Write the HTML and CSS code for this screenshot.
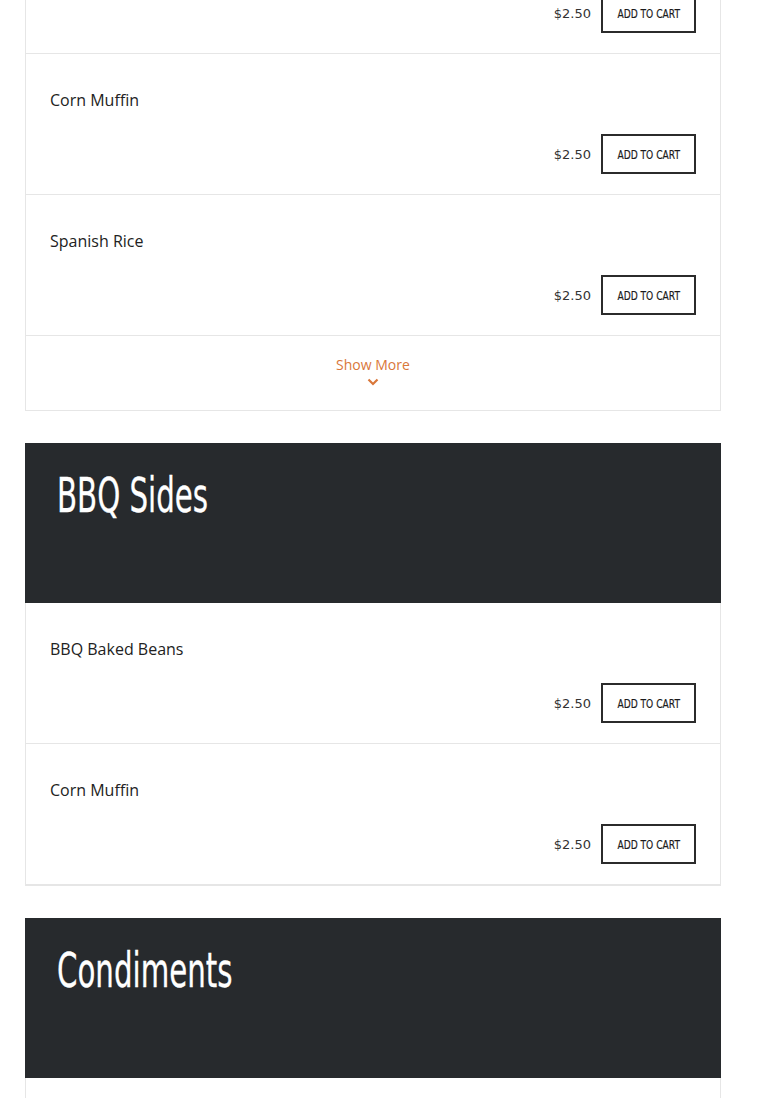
FILE: index.html
```html
<!DOCTYPE html>
<html lang="en">
<head>
  <meta charset="UTF-8" />
  <title>Menu</title>
  <link rel="stylesheet" href="styles.css">
</head>
<body>

  <div class="menu">

    <section class="category first">
      <div class="items">
        <div class="item">
          <p class="item-name">Coleslaw</p>
          <div class="item-buy">
            <span class="price">$2.50</span>
            <button class="add-btn"><span>Add to cart</span></button>
          </div>
        </div>
        <div class="item">
          <p class="item-name">Corn Muffin</p>
          <div class="item-buy">
            <span class="price">$2.50</span>
            <button class="add-btn"><span>Add to cart</span></button>
          </div>
        </div>
        <div class="item">
          <p class="item-name">Spanish Rice</p>
          <div class="item-buy">
            <span class="price">$2.50</span>
            <button class="add-btn"><span>Add to cart</span></button>
          </div>
        </div>
        <div class="show-more">
          <span>Show More</span>
          <svg width="12" height="8" viewBox="0 0 12 8"><path d="M1.5 1.5 L6 6 L10.5 1.5" fill="none" stroke="#d9773a" stroke-width="2.2"/></svg>
        </div>
      </div>
    </section>

    <section class="category">
      <div class="cat-head">
        <h2>BBQ Sides</h2>
      </div>
      <div class="items">
        <div class="item">
          <p class="item-name">BBQ Baked Beans</p>
          <div class="item-buy">
            <span class="price">$2.50</span>
            <button class="add-btn"><span>Add to cart</span></button>
          </div>
        </div>
        <div class="item">
          <p class="item-name">Corn Muffin</p>
          <div class="item-buy">
            <span class="price">$2.50</span>
            <button class="add-btn"><span>Add to cart</span></button>
          </div>
        </div>
      </div>
    </section>

    <section class="category">
      <div class="cat-head">
        <h2>Condiments</h2>
      </div>
      <div class="items">
        <div class="item"></div>
      </div>
    </section>

  </div>

</body>
</html>
```

FILE: styles.css
```css
body {
  margin: 0;
  background-color: #fff;
  font-family: 'Open Sans', sans-serif;
  color: #222;
}
.menu {
  width: 696px;
  margin-left: 25px;
}
.category {
  margin-bottom: 32px;
}
.category.first {
  margin-top: -87px;
}
.cat-head {
  background-color: #272a2d;
  height: 160px;
  padding: 24px 32px 0;
  box-sizing: border-box;
}
.cat-head h2 {
  display: inline-block;
  margin: 0;
  color: #fff;
  font-family: 'DejaVu Sans', sans-serif;
  font-weight: 400;
  font-size: 48px;
  line-height: 56px;
  transform: scaleX(0.61);
  transform-origin: left center;
  -webkit-text-stroke: 0.3px #fff;
}
.items {
  border: 1px solid #e6e6e6;
  border-top: none;
}
.item {
  padding: 35px 24px 20px;
  border-bottom: 1px solid #e6e6e6;
}
.item-name {
  margin: 0;
  font-size: 16px;
  line-height: 22px;
  color: #222;
}
.item-buy {
  display: flex;
  justify-content: flex-end;
  align-items: center;
  gap: 10px;
  margin-top: 23px;
}
.price {
  font-family: 'DejaVu Sans', sans-serif;
  font-size: 13px;
  color: #333;
}
.add-btn {
  width: 95px;
  height: 40px;
  background: #fff;
  border: 2px solid #2b2b2b;
  padding: 0;
  font-family: 'DejaVu Sans', sans-serif;
  font-size: 13px;
  text-transform: uppercase;
  color: #1a1a1a;
  cursor: pointer;
}
.add-btn span {
  display: inline-block;
  transform: scaleX(0.7);
  white-space: nowrap;
  -webkit-text-stroke: 0.2px #1a1a1a;
}
.show-more {
  display: flex;
  flex-direction: column;
  align-items: center;
  padding: 19px 0 21px;
  height: 34px;
  color: #d9773a;
  font-size: 14px;
  line-height: 20px;
}
.show-more svg {
  margin-top: 3px;
}
```
